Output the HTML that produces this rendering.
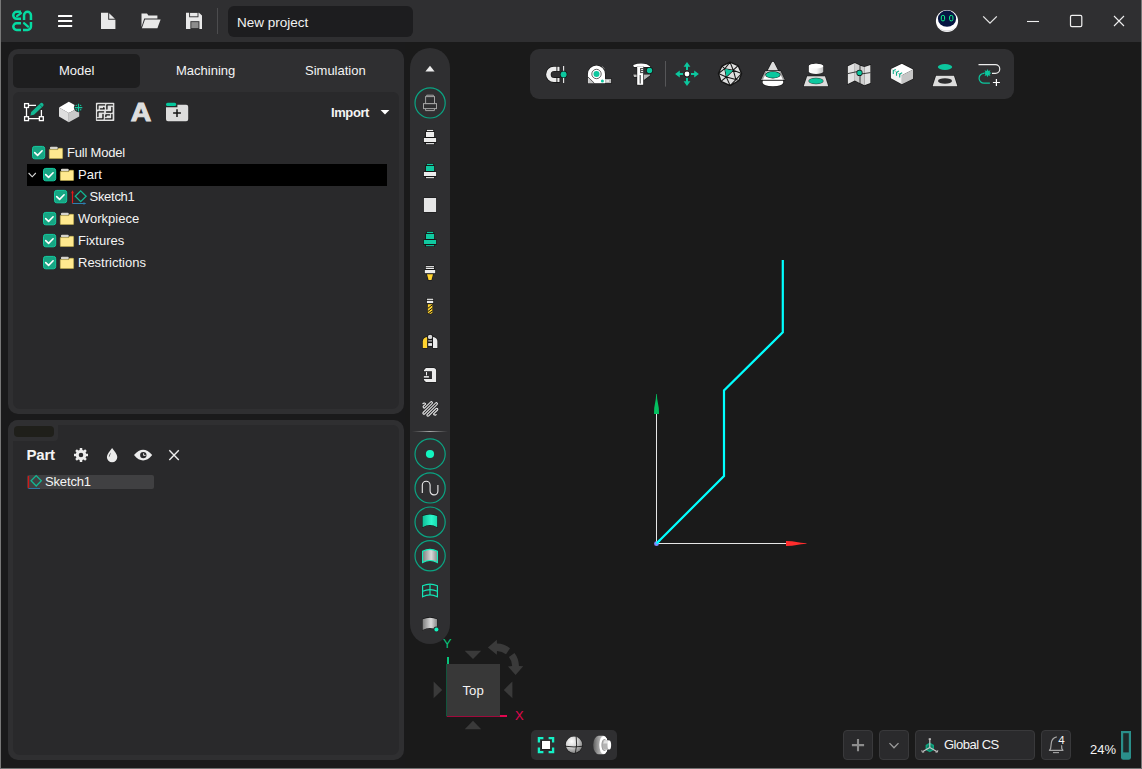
<!DOCTYPE html>
<html lang="en">
<head>
<meta charset="utf-8">
<title>New project</title>
<style>
html,body{margin:0;padding:0;}
body{width:1142px;height:769px;overflow:hidden;background:#1a1a1b;font-family:"Liberation Sans",sans-serif;color:#f2f2f2;position:relative;}
.abs{position:absolute;}
svg{position:absolute;overflow:visible;}
#titlebar{left:0;top:0;width:1142px;height:42px;background:#2f2f31;}
#viewport{left:405px;top:42px;width:737px;height:727px;background:#1a1a1a;}
#winL{left:0;top:0;width:1.15px;height:769px;background:#787878;}
#winR{left:1140.8px;top:0;width:1.2px;height:769px;background:#767676;}
#winB{left:0;top:767.5px;width:1142px;height:1.5px;background:#727272;}
.t{position:absolute;white-space:nowrap;line-height:1;}
#projbox{left:228px;top:6px;width:185px;height:31px;background:#1d1d1f;border-radius:6px;}
.panel{background:#2f2f31;border-radius:10px;}
.inner{background:#29292b;}
#tabActive{left:13px;top:54px;width:127px;height:34px;background:#1e1e1f;border-radius:5px;}
.tab{font-size:13px;top:64px;color:#f4f4f4;}
.tree{font-size:13px;color:#f4f4f4;}
.cb{position:absolute;width:13px;height:13px;border-radius:3px;background:#1fae8d;}
#vtool{left:410px;top:48px;width:40px;height:596px;border-radius:20px;background:#2f2f31;}
.ring{position:absolute;width:30px;height:30px;border-radius:50%;border:1px solid #0aa583;box-sizing:border-box;}
#htool{left:530px;top:49px;width:484px;height:50px;border-radius:9px;background:#2f2f31;}
.btn{position:absolute;background:#2a2a2c;border:1px solid #39393b;border-radius:4px;box-sizing:border-box;}
</style>
</head>
<body>
<div class="abs" id="viewport"></div>
<div class="abs" id="titlebar"></div>

<!-- ===== title bar ===== -->
<div class="abs" id="projbox"></div>
<div class="t" style="left:237px;top:15.5px;font-size:13.5px;color:#f2f2f2;">New project</div>
<div class="abs" style="left:217px;top:8px;width:1px;height:26px;background:#4c4c4e;"></div>
<svg id="tb-icons" width="1142" height="42" style="left:0;top:0" viewBox="0 0 1142 42">
  <!-- logo -->
  <g fill="none" stroke="#05dba2" stroke-width="2.5" stroke-linecap="butt" stroke-linejoin="round">
    <path d="M21 11.75 H16.8 A3.55 3.55 0 0 0 16.8 18.85 H21"/>
    <path d="M17 16.2 L21 13.2" stroke-linecap="round" stroke-width="2.2"/>
    <path d="M24.05 20 V15.2 A3.45 3.45 0 0 1 30.95 15.2 V20"/>
    <path d="M21 23.3 H16.6 A3.3 3.3 0 0 0 16.6 29.9 H21"/>
    <path d="M30.95 22 V26.5 A3.4 3.4 0 0 1 27.55 29.9 H23"/>
    <path d="M24 23.2 L28 26.7" stroke-linecap="round" stroke-width="2.2"/>
  </g>
  <!-- hamburger -->
  <g fill="#ffffff">
    <rect x="58" y="14.9" width="14.2" height="2.2" rx="0.6"/>
    <rect x="58" y="19.9" width="14.2" height="2.2" rx="0.6"/>
    <rect x="58" y="24.9" width="14.2" height="2.2" rx="0.6"/>
  </g>
  <!-- new file -->
  <path d="M101 12.7 H108.2 V19.7 H115.4 V29 H101 Z" fill="#e9e9e9"/>
  <path d="M109.2 13.2 L114.9 18.8 H109.2 Z" fill="#e9e9e9"/>
  <!-- open folder -->
  <path d="M141.5 13.4 H147 L148.4 15.5 H157.4 V18.6 H144.2 L141.5 27 Z" fill="#e9e9e9"/>
  <path d="M145 19.6 H160.6 L157.4 28.3 H141.9 Z" fill="#e9e9e9"/>
  <!-- save -->
  <path d="M186 12.7 H199 L202 15.6 V29 H186 Z" fill="#e9e9e9"/>
  <rect x="189.6" y="12.2" width="8.4" height="4.6" fill="none" stroke="#2f2f31" stroke-width="0.9"/>
  <rect x="190.4" y="21.2" width="9" height="7.8" fill="#2f2f31"/>
  <rect x="191.3" y="22.1" width="7.2" height="6" fill="#8c8c8c"/>
  <!-- avatar -->
  <ellipse cx="947" cy="21" rx="11.1" ry="11.1" fill="#ffffff"/>
  <path d="M937 25 A11 11 0 0 0 957 25 A11 9 0 0 1 937 25Z" fill="#d8d8dc"/>
  <ellipse cx="947" cy="18.7" rx="9.1" ry="8.1" fill="#061542"/>
  <rect x="941.3" y="15.4" width="3.3" height="5.5" rx="1.5" fill="none" stroke="#10f58a" stroke-width="1"/>
  <rect x="949.6" y="15.4" width="3.3" height="5.5" rx="1.5" fill="none" stroke="#10f58a" stroke-width="1"/>
  <!-- chevron -->
  <path d="M983.2 16.4 L990 23.2 L996.8 16.4" fill="none" stroke="#e4e4e4" stroke-width="1.3"/>
  <!-- window controls -->
  <path d="M1027 21.5 H1039" stroke="#f0f0f0" stroke-width="1.1"/>
  <rect x="1070.5" y="15.4" width="11.3" height="11.2" rx="1.4" fill="none" stroke="#f0f0f0" stroke-width="1.2"/>
  <path d="M1114 16 L1124 26 M1124 16 L1114 26" stroke="#f0f0f0" stroke-width="1.1"/>
</svg>

<!-- ===== left panel 1 ===== -->
<div class="abs panel" style="left:8px;top:48.8px;width:396.2px;height:365.2px;"></div>
<div class="abs inner" style="left:13px;top:92px;width:386px;height:316.8px;border-radius:6px 6px 7px 7px;"></div>
<div class="abs" id="tabActive"></div>
<div class="t tab" style="left:59px;">Model</div>
<div class="t tab" style="left:176px;">Machining</div>
<div class="t tab" style="left:305px;">Simulation</div>
<div class="t" style="left:331px;top:106px;font-size:13px;font-weight:bold;letter-spacing:-0.4px;color:#f4f4f4;">Import</div>
<div class="abs" style="left:27px;top:164px;width:360px;height:22px;background:#000;"></div>
<svg id="p1-icons" width="404" height="420" style="left:0;top:0" viewBox="0 0 404 420">
  <g fill="none" stroke="#ffffff" stroke-width="1.3">
    <path d="M26.5 107 V117 M29 105.4 H36 M41.4 110 V116.5 M29 118.6 H39"/>
    <rect x="24.6" y="103.6" width="3.9" height="3.9"/>
    <rect x="24.6" y="116.7" width="3.9" height="3.9"/>
    <rect x="39.4" y="116.7" width="3.9" height="3.9"/>
  </g>
  <path d="M30.4 115.6 L31.2 112 L40.2 103.4 A1.9 1.9 0 0 1 43 106.2 L34 114.8 Z" fill="#12b793"/>
  <path d="M39.4 104.2 L42.2 107" stroke="#0a7a62" stroke-width="0.9"/>
  <path d="M68.8 101.8 L79.2 107.4 L68.8 113 L59 107.4 Z" fill="#ffffff"/>
  <path d="M59 107.4 L68.8 113 V122.2 L59 116.6 Z" fill="#dedede"/>
  <path d="M79.2 107.4 L68.8 113 V122.2 L79.2 116.6 Z" fill="#c9c9c9"/>
  <circle cx="78.5" cy="107.6" r="4.6" fill="#29292b"/>
  <path d="M78.5 103.8 V111.4 M74.7 107.6 H82.3" stroke="#12c79f" stroke-width="1.2"/>
  <g fill="#12c79f"><circle cx="76.3" cy="105.4" r="0.7"/><circle cx="80.7" cy="105.4" r="0.7"/><circle cx="76.3" cy="109.8" r="0.7"/><circle cx="80.7" cy="109.8" r="0.7"/></g>
  <rect x="95.9" y="102.8" width="18.4" height="18.3" rx="0.8" fill="#e2e2e2"/>
  <g fill="none" stroke="#141414" stroke-width="1.35" stroke-linecap="round" stroke-linejoin="round">
    <path d="M104.6 104.9 H97.9 V109"/>
    <path d="M100.4 108.8 H104.3 M103.8 107.7 V108.8"/>
    <path d="M112.5 104.9 H106.9 V109"/>
    <path d="M111.9 107.4 V112 H106.5"/>
    <path d="M103.6 111.8 H97.9 V116.5"/>
    <path d="M103 114.5 V118.9 H97.4"/>
    <path d="M109.5 114.9 H105.9 V116.5"/>
    <path d="M111.9 114.5 V118.9 H105.4"/>
  </g>
  <text x="141.1" y="121.2" text-anchor="middle" font-family="Liberation Sans, sans-serif" font-weight="bold" font-size="26.3" fill="#dedede" stroke="#dedede" stroke-width="1.1" stroke-linejoin="miter" transform="translate(141.1 0) scale(1.08 1) translate(-141.1 0)">A</text>
  <rect x="166" y="102.7" width="10.2" height="3.4" rx="1.6" fill="#05c79c"/>
  <path d="M166 107.2 H177.4 V104.7 H186.2 Q188.2 104.7 188.2 106.7 V119.2 Q188.2 121.2 186.2 121.2 H168 Q166 121.2 166 119.2 Z" fill="#dcdcdc"/>
  <path d="M177 109.2 V117 M173.1 113.1 H180.9" stroke="#151515" stroke-width="1.5"/>
  <path d="M380.6 109.9 H389.4 L385 114.5 Z" fill="#ffffff"/>
  <rect x="32.5" y="146.4" width="12.2" height="12.4" rx="2.2" fill="#17a583" stroke="#12cda2" stroke-width="1"/><path d="M34.7 152.6 L37.6 155.4 L42.1 150.8" fill="none" stroke="#ffffff" stroke-width="1.6" stroke-linecap="round" stroke-linejoin="round"/><rect x="49.9" y="146.7" width="7.9" height="2.6" rx="1.2" fill="#d6d4cc"/><path d="M49.3 149.6 H57.9 L58.6 148.3 H62.1 Q62.6 148.3 62.6 148.8 V158.0 Q62.6 158.5 62.1 158.5 H49.8 Q49.3 158.5 49.3 158.0 Z" fill="#ffe98f" stroke="#c9b44a" stroke-width="0.5"/>
  <path d="M28.6 173 L32.2 176.8 L35.8 173" fill="none" stroke="#d8d8d8" stroke-width="1.1"/>
  <rect x="43.5" y="168.4" width="12.2" height="12.4" rx="2.2" fill="#17a583" stroke="#12cda2" stroke-width="1"/><path d="M45.7 174.6 L48.6 177.4 L53.1 172.8" fill="none" stroke="#ffffff" stroke-width="1.6" stroke-linecap="round" stroke-linejoin="round"/><rect x="60.9" y="168.7" width="7.9" height="2.6" rx="1.2" fill="#d6d4cc"/><path d="M60.3 171.6 H68.9 L69.6 170.3 H73.1 Q73.6 170.3 73.6 170.8 V180.0 Q73.6 180.5 73.1 180.5 H60.8 Q60.3 180.5 60.3 180.0 Z" fill="#ffe98f" stroke="#c9b44a" stroke-width="0.5"/>
  <rect x="54.5" y="190.4" width="12.2" height="12.4" rx="2.2" fill="#17a583" stroke="#12cda2" stroke-width="1"/><path d="M56.7 196.6 L59.6 199.4 L64.1 194.8" fill="none" stroke="#ffffff" stroke-width="1.6" stroke-linecap="round" stroke-linejoin="round"/><path d="M72.5 191.3 V203.5" stroke="#e01818" stroke-width="1.2"/><path d="M71.1 193.3 L72.5 190.3 L73.9 193.3 Z" fill="#e01818"/><path d="M72.5 203.5 H84.5" stroke="#2d7fb0" stroke-width="1"/><path d="M83.5 202.3 L86.3 203.5 L83.5 204.70000000000002 Z" fill="#2d7fb0"/><path d="M80.7 190.9 L86.1 196.3 L80.7 201.70000000000002 L75.3 196.3 Z" fill="none" stroke="#12b793" stroke-width="1.3"/>
  <rect x="43.5" y="212.4" width="12.2" height="12.4" rx="2.2" fill="#17a583" stroke="#12cda2" stroke-width="1"/><path d="M45.7 218.6 L48.6 221.4 L53.1 216.8" fill="none" stroke="#ffffff" stroke-width="1.6" stroke-linecap="round" stroke-linejoin="round"/><rect x="60.9" y="212.7" width="7.9" height="2.6" rx="1.2" fill="#d6d4cc"/><path d="M60.3 215.6 H68.9 L69.6 214.3 H73.1 Q73.6 214.3 73.6 214.8 V224.0 Q73.6 224.5 73.1 224.5 H60.8 Q60.3 224.5 60.3 224.0 Z" fill="#ffe98f" stroke="#c9b44a" stroke-width="0.5"/>
  <rect x="43.5" y="234.4" width="12.2" height="12.4" rx="2.2" fill="#17a583" stroke="#12cda2" stroke-width="1"/><path d="M45.7 240.6 L48.6 243.4 L53.1 238.8" fill="none" stroke="#ffffff" stroke-width="1.6" stroke-linecap="round" stroke-linejoin="round"/><rect x="60.9" y="234.7" width="7.9" height="2.6" rx="1.2" fill="#d6d4cc"/><path d="M60.3 237.6 H68.9 L69.6 236.3 H73.1 Q73.6 236.3 73.6 236.8 V246.0 Q73.6 246.5 73.1 246.5 H60.8 Q60.3 246.5 60.3 246.0 Z" fill="#ffe98f" stroke="#c9b44a" stroke-width="0.5"/>
  <rect x="43.5" y="256.4" width="12.2" height="12.4" rx="2.2" fill="#17a583" stroke="#12cda2" stroke-width="1"/><path d="M45.7 262.6 L48.6 265.4 L53.1 260.8" fill="none" stroke="#ffffff" stroke-width="1.6" stroke-linecap="round" stroke-linejoin="round"/><rect x="60.9" y="256.7" width="7.9" height="2.6" rx="1.2" fill="#d6d4cc"/><path d="M60.3 259.6 H68.9 L69.6 258.3 H73.1 Q73.6 258.3 73.6 258.8 V268.0 Q73.6 268.5 73.1 268.5 H60.8 Q60.3 268.5 60.3 268.0 Z" fill="#ffe98f" stroke="#c9b44a" stroke-width="0.5"/>
</svg>

<!-- tree -->
<div class="t tree" style="left:67px;top:146px;letter-spacing:-0.2px;">Full Model</div>
<div class="t tree" style="left:78px;top:168px;">Part</div>
<div class="t tree" style="left:89.5px;top:190px;letter-spacing:-0.28px;">Sketch1</div>
<div class="t tree" style="left:78px;top:212px;">Workpiece</div>
<div class="t tree" style="left:78px;top:234px;">Fixtures</div>
<div class="t tree" style="left:78px;top:256px;">Restrictions</div>

<!-- ===== left panel 2 ===== -->
<div class="abs panel" style="left:8px;top:420px;width:396.2px;height:340.3px;"></div>
<div class="abs inner" style="left:13px;top:425px;width:386px;height:330.3px;border-radius:6px 6px 7px 7px;"></div>
<div class="abs" style="left:8px;top:420px;width:50px;height:20.8px;background:#2f2f31;border-radius:10px 0 4px 0;"></div>
<div class="abs" style="left:14px;top:426px;width:40px;height:10.8px;background:#1f1f1a;border-radius:4px;"></div>
<div class="t" style="left:26.5px;top:446.8px;font-size:15px;font-weight:bold;letter-spacing:-0.2px;color:#f4f4f4;">Part</div>
<div class="abs" style="left:27px;top:475px;width:127px;height:14px;background:#404042;border-radius:2px;"></div>
<div class="t" style="left:45px;top:475px;font-size:13px;letter-spacing:-0.15px;color:#f4f4f4;">Sketch1</div>
<svg id="p2-icons" width="404" height="349" style="left:0;top:420px" viewBox="0 420 404 349">
  <path d="M79.64 449.88 L79.80 448.00 L82.20 448.00 L82.36 449.88 L83.66 450.41 L85.10 449.20 L86.80 450.90 L85.59 452.34 L86.12 453.64 L88.00 453.80 L88.00 456.20 L86.12 456.36 L85.59 457.66 L86.80 459.10 L85.10 460.80 L83.66 459.59 L82.36 460.12 L82.20 462.00 L79.80 462.00 L79.64 460.12 L78.34 459.59 L76.90 460.80 L75.20 459.10 L76.41 457.66 L75.88 456.36 L74.00 456.20 L74.00 453.80 L75.88 453.64 L76.41 452.34 L75.20 450.90 L76.90 449.20 L78.34 450.41 Z M78.7 455 a2.3 2.3 0 1 0 4.6 0 a2.3 2.3 0 1 0 -4.6 0 Z" fill="#ececec" fill-rule="evenodd"/>
  <path d="M112.1 448 C114.6 451.4 117.3 454.2 117.3 457 A5.2 5.2 0 0 1 106.9 457 C106.9 454.2 109.6 451.4 112.1 448 Z" fill="#ececec"/>
  <path d="M110.9 452.4 C109.4 454.4 108.7 455.8 108.9 457.3 C109.5 456 110.4 454.6 110.9 452.4 Z" fill="#29292b"/>
  <path d="M134 455.1 C137 451.2 140.2 449.7 143.1 449.7 C146 449.7 149.2 451.2 152.2 455.1 C149.2 459 146 460.5 143.1 460.5 C140.2 460.5 137 459 134 455.1 Z" fill="#ececec"/>
  <circle cx="143.3" cy="455.1" r="3.2" fill="#29292b"/>
  <path d="M143.6 453.3 V455.4 H145.6" fill="none" stroke="#ececec" stroke-width="0.9"/>
  <path d="M169.3 450.3 L178.8 460 M178.8 450.3 L169.3 460" stroke="#ececec" stroke-width="1.4"/>
  <!-- sketch chip icon -->
  <path d="M28.5 476 V488" stroke="#d01818" stroke-width="1.3"/>
  <path d="M28.5 488.5 H40" stroke="#2d7fb0" stroke-width="0.9"/>
  <path d="M36.2 475.6 L41.3 480.8 L36.2 486 L31.1 480.8 Z" fill="none" stroke="#12b793" stroke-width="1.3"/>
</svg>

<!-- ===== vertical toolbar ===== -->
<div class="abs" id="vtool"></div>
<svg id="vt-icons" width="60" height="620" style="left:400px;top:40px" viewBox="400 40 60 620">
<defs>
<linearGradient id="gTeal" x1="0" x2="1" y1="0" y2="0"><stop offset="0" stop-color="#0fbf98"/><stop offset="0.6" stop-color="#2cf7cb"/><stop offset="1" stop-color="#17dcb0"/></linearGradient>
<linearGradient id="gGrey" x1="0" x2="1" y1="0" y2="0"><stop offset="0" stop-color="#7e7e7e"/><stop offset="0.58" stop-color="#dadada"/><stop offset="1" stop-color="#8a8a8a"/></linearGradient>
<linearGradient id="gSep" x1="0" x2="1" y1="0" y2="0"><stop offset="0" stop-color="#8a8a8a" stop-opacity="0"/><stop offset="0.5" stop-color="#a8a8a8" stop-opacity="1"/><stop offset="1" stop-color="#8a8a8a" stop-opacity="0"/></linearGradient>
</defs>
<path d="M425.4 71.4 L430 65.8 L434.6 71.4 Z" fill="#ececec"/>
<circle cx="430.1" cy="102.9" r="15.1" fill="none" stroke="#0aa583" stroke-width="1.2"/>
<g fill="none" stroke="#a2a2a2" stroke-width="1"><path d="M426.7 96.2 V95.2 H433.4 V96.2"/><rect x="425.6" y="96.6" width="8.9" height="7"/><rect x="423.5" y="103.6" width="13" height="5"/><path d="M425.6 108.6 V110.6 H434.4 V108.6"/></g>
<path d="M426.2 129.4 H433.8 V131.2 H434.7 V137.4 H436.7 V142.8 H434.7 V144.8 H425.3 V142.8 H423.3 V137.4 H425.3 V131.2 H426.2 Z" fill="#141414"/><rect x="426.9" y="129.9" width="6.3" height="1.2" fill="#ececec"/><rect x="426" y="132" width="8.1" height="5" fill="#ececec"/><rect x="423.9" y="138" width="12.2" height="4" fill="#ececec"/><rect x="426" y="143.1" width="8.1" height="1.1" fill="#ececec"/>
<path d="M426.2 163.4 H433.8 V165.2 H434.7 V171.4 H436.7 V176.8 H434.7 V178.8 H425.3 V176.8 H423.3 V171.4 H425.3 V165.2 H426.2 Z" fill="#141414"/><rect x="426.9" y="163.9" width="6.3" height="1.2" fill="#10c9a0"/><rect x="426" y="166" width="8.1" height="5" fill="#10c9a0"/><rect x="423.9" y="172" width="12.2" height="4" fill="#ececec"/><rect x="426" y="177.1" width="8.1" height="1.1" fill="#ececec"/>
<rect x="423.4" y="197.5" width="13.2" height="15" fill="#141414"/><rect x="423.9" y="198" width="12.2" height="14" fill="#e6e6e6"/>
<path d="M426.2 231.4 H433.8 V233.2 H434.7 V239.4 H436.7 V244.8 H434.7 V246.8 H425.3 V244.8 H423.3 V239.4 H425.3 V233.2 H426.2 Z" fill="#141414"/><rect x="426.9" y="231.9" width="6.3" height="1.2" fill="#10c9a0"/><rect x="426" y="234" width="8.1" height="5" fill="#10c9a0"/><rect x="423.9" y="240" width="12.2" height="4" fill="#10c9a0"/><rect x="426" y="245.1" width="8.1" height="1.1" fill="#10c9a0"/>
<path d="M425.2 265.5 H434.6 V269.5 H435.8 V273.8 H433.6 L432 280.6 H428 L426.4 273.8 H424.2 V269.5 H425.2 Z" fill="#141414"/><rect x="425.8" y="266.1" width="8.2" height="1.1" fill="#ececec"/><rect x="425.8" y="267.8" width="8.2" height="1.2" fill="#ececec"/><rect x="424.8" y="270" width="10.4" height="3.2" fill="#ececec"/><path d="M427 274.3 H433 L431.5 280 H428.5 Z" fill="#ffd22e"/>
<rect x="426.3" y="298.1" width="7.5" height="5.6" fill="#141414"/><rect x="426.9" y="298.7" width="6.3" height="1.2" fill="#ececec"/><rect x="426.9" y="300.8" width="6.3" height="2.3" fill="#ececec"/><path d="M427.2 303.8 H433 V313.2 L430.1 314.6 L427.2 313.2 Z" fill="#141414"/><path d="M427.8 304.3 H432.4 V312.9 L430.1 313.9 L427.8 312.9 Z" fill="#ffd22e"/><path d="M427.8 308.4 L432.4 304.8 M427.8 311.6 L432.4 308 M428.6 313.6 L432.4 311.0" stroke="#141414" stroke-width="1" fill="none"/>
<path d="M422.3 348.6 V341.6 Q422.3 336.8 427.7 336.3 V348.6 Z" fill="#141414"/><path d="M437.9 348.6 V341.6 Q437.9 336.8 432.5 336.3 V348.6 Z" fill="#141414"/><path d="M422.8 348.1 V341.6 Q422.8 337.4 427.2 336.9 V348.1 Z" fill="#ffd22e"/><path d="M437.4 348.1 V341.6 Q437.4 337.4 433 336.9 V348.1 Z" fill="#ececec"/><circle cx="430.1" cy="336.9" r="2.8" fill="#141414"/><circle cx="430.1" cy="336.9" r="2.2" fill="#d6d6d6"/><rect x="427.7" y="339.6" width="4.8" height="7" fill="#141414"/><rect x="428.2" y="340.4" width="3.8" height="1" fill="#ececec"/><rect x="428.2" y="343.1" width="3.8" height="2.8" fill="#ececec"/>
<path d="M423.4 370 L425.6 367.4 H433.4 Q436.6 367.4 436.6 370.6 V382.4 H425.6 L423.4 380.2 V378.4 H431.4 V371.8 H423.4 Z" fill="#141414"/><path d="M423.9 370.2 L425.9 367.9 H433.4 Q436.1 367.9 436.1 370.6 V381.9 H425.9 L423.9 380 V378.9 H431.9 V371.3 H423.9 Z" fill="#ececec"/><rect x="426" y="372" width="1" height="3.4" fill="#ececec"/><rect x="423.9" y="376.1" width="5" height="1.5" fill="#ececec"/>
<g fill="none" stroke-linecap="round" transform="translate(419.6 399)"><path d="M3.3 4.6 A1.5 1.5 0 0 1 6 5 L3.8 7.2 A1.06 1.06 0 0 0 5.3 8.7 L11 3 A1.06 1.06 0 0 1 12.5 4.5 L3.6 13.4 A1.06 1.06 0 0 0 5.1 14.9 L16 4 A1.06 1.06 0 0 1 17.5 5.5 L7.6 15.4 A1.06 1.06 0 0 0 9.1 16.9 L16.4 9.6 A1.06 1.06 0 0 1 17.9 11.1 L14 15 A1.5 1.5 0 0 0 16.6 15.6" stroke="#f0f0f0" stroke-width="1.05"/></g>
<rect x="412" y="431" width="36" height="1" fill="url(#gSep)"/>
<circle cx="430.1" cy="454" r="15.1" fill="none" stroke="#0aa583" stroke-width="1.2"/><circle cx="430" cy="454" r="4.1" fill="#12f5c0"/>
<circle cx="430.1" cy="487.9" r="15.1" fill="none" stroke="#0aa583" stroke-width="1.2"/><path d="M422.3 493 V485.1 A3.9 3.9 0 0 1 430.1 485.1 V491 A3.9 3.9 0 0 0 437.9 491 V485" fill="none" stroke="#ececec" stroke-width="1.1"/>
<circle cx="430.1" cy="522.1" r="15.1" fill="none" stroke="#0aa583" stroke-width="1.2"/><path d="M422.1 515.6 Q430 512.4 437.7 515.6 V528 Q430 523.2 422.1 528 Z" fill="#141414"/><path d="M422.6 516 Q430 513 437.2 516 V527.3 Q430 522.8 422.6 527.3 Z" fill="url(#gTeal)"/>
<circle cx="430.1" cy="555.8" r="15.1" fill="none" stroke="#0aa583" stroke-width="1.2"/><path d="M422.6 551.2 Q430 547.6 437.4 551.2 V562.6 Q430 558.4 422.6 562.6 Z" fill="url(#gGrey)" stroke="#12f5c0" stroke-width="1.1"/>
<g fill="none" stroke="#12e5b5" stroke-width="1.2"><path d="M422.6 585.8 Q430 582.6 437.4 585.8 V596.8 Q430 593 422.6 596.8 Z"/><path d="M422.6 591.2 Q430 588 437.4 591.2"/><path d="M430 584.2 V594.9"/></g>
<path d="M422.1 618.9 Q430 615.2 437.6 618.9 V630.6 Q430 626.2 422.1 630.6 Z" fill="#141414"/><path d="M422.6 619.3 Q430 616 437.1 619.3 V630 Q430 626 422.6 630 Z" fill="url(#gGrey)"/><circle cx="436.4" cy="629.5" r="3" fill="#2f2f31"/><circle cx="436.4" cy="629.5" r="2" fill="#12f5c0"/>
</svg>

<!-- ===== horizontal toolbar ===== -->
<div class="abs" id="htool"></div>
<svg id="ht-icons" width="500" height="60" style="left:525px;top:44px" viewBox="525 44 500 60">
<defs><linearGradient id="gCyl" x1="0" x2="1" y1="0" y2="0"><stop offset="0" stop-color="#ffffff"/><stop offset="0.55" stop-color="#f4f4f4"/><stop offset="1" stop-color="#bdbdbd"/></linearGradient></defs>
<path d="M559.5 66.7 H553.8 A7.7 7.7 0 0 0 553.8 82.1 H559.5 V77.9 H554.2 A3.5 3.5 0 0 1 554.2 70.9 H559.5 Z" fill="#ececec" stroke="#141414" stroke-width="1.2" paint-order="stroke"/><path d="M556.9 66.3 V71.2 M556.9 77.7 V82.6" stroke="#141414" stroke-width="0.9"/><path d="M563.6 66 V83" stroke="#ececec" stroke-width="1.1"/><circle cx="563.6" cy="74.4" r="3.7" fill="#141414"/><circle cx="563.6" cy="74.4" r="3" fill="#0cc79e"/>
<path d="M587.4 83.7 V74 A9 9 0 0 1 605.5 74 V78.3 H611.6 V83.7 Z" fill="#141414"/><path d="M587.9 83.2 V74 A8.5 8.5 0 0 1 605 74 V83.2 Z" fill="#ffffff"/><rect x="605" y="78.9" width="6.1" height="4.2" fill="#b9b9b9"/><rect x="606.4" y="80.2" width="2.6" height="1.6" fill="#f2f2f2"/><path d="M588.2 77.4 L594 83 H588.2 Z" fill="#c4c4c4"/><path d="M588 77 L594.4 83.2" stroke="#141414" stroke-width="0.7"/><circle cx="596.5" cy="74" r="4.7" fill="none" stroke="#3a3a3a" stroke-width="0.8"/><circle cx="596.5" cy="74" r="3" fill="#0cc79e"/><circle cx="602.4" cy="81" r="1.5" fill="#0cc79e"/><path d="M601.9 66.3 L604.6 68.8" stroke="#9a9a9a" stroke-width="0.8"/>
<g stroke="#141414" stroke-width="1.1" paint-order="stroke" stroke-linejoin="round"><path d="M633.2 74.6 H637.2 V77 H634 Z" fill="#bdbdbd"/><path d="M643.2 74.6 H650.2 V75.2 L643.2 80.6 Z" fill="#b4b4b4"/><path d="M633.2 65 L637.2 63.8 Q642 63 646.8 64.2 L650.2 66.4 V67 H633.8 Z" fill="#ffffff"/><rect x="637.2" y="67" width="6" height="17.8" fill="#ffffff"/></g><rect x="637.2" y="66.4" width="6" height="1.2" fill="#ffffff"/><path d="M640.2 75 V83.6" stroke="#141414" stroke-width="0.9"/><path d="M641 68.6 H643.2 M641 70.6 H643.2 M641 72.6 H643.2 M640.6 68 V73.2" stroke="#141414" stroke-width="0.8"/><circle cx="649.5" cy="70.5" r="3.4" fill="#141414"/><circle cx="649.5" cy="70.5" r="2.7" fill="#0cc79e"/>
<rect x="665" y="61" width="1" height="25.6" fill="#565658"/>
<path transform="rotate(0 687 74)" d="M687 62.1 L690.4 66.8 H688 V70 H686 V66.8 H683.6 Z" fill="#0cc79e"/><path transform="rotate(90 687 74)" d="M687 62.1 L690.4 66.8 H688 V70 H686 V66.8 H683.6 Z" fill="#0cc79e"/><path transform="rotate(180 687 74)" d="M687 62.1 L690.4 66.8 H688 V70 H686 V66.8 H683.6 Z" fill="#0cc79e"/><path transform="rotate(270 687 74)" d="M687 62.1 L690.4 66.8 H688 V70 H686 V66.8 H683.6 Z" fill="#0cc79e"/><circle cx="687" cy="74" r="3.1" fill="#141414"/><circle cx="687" cy="74" r="2.4" fill="#ffffff"/>
<path d="M730 62.1 L738.1 65.6 L741.6 73.5 L739 80.5 L730.2 85.6 L721 81.4 L718.4 73.5 L721.9 66.1 Z" fill="#dedede" stroke="#141414" stroke-width="1.3" stroke-linejoin="round"/><path d="M730 62.1 L724.8 68.7 M730 62.1 L733.3 70.2 M721.9 66.1 L724.8 68.7 M718.4 73.5 L724.8 68.7 M718.4 73.5 L726.3 77 M724.8 68.7 L733.3 70.2 M724.8 68.7 L726.3 77 M733.3 70.2 L726.3 77 M733.3 70.2 L738.1 65.6 M733.3 70.2 L741.6 73.5 M733.3 70.2 L735.9 79.6 M726.3 77 L735.9 79.6 M726.3 77 L721 81.4 M726.3 77 L730.2 85.6 M735.9 79.6 L730.2 85.6 M735.9 79.6 L739 80.5 M735.9 79.6 L741.6 73.5 " fill="none" stroke="#141414" stroke-width="1.05"/><path d="M725.1 69.1 L732.9 70.4 L726.5 76.6 Z" fill="#0cc79e"/>
<path d="M772.9 61.2 Q774.2 61.2 774.8 62.6 L778.6 70.4 H781 L785.6 80.6 H783.7 L783.8 83 Q783 86.8 772.9 86.8 Q762.8 86.8 762 83 L762.1 80.6 H760.2 L764.8 70.4 H767.2 L771 62.6 Q771.6 61.2 772.9 61.2 Z" fill="#141414"/><path d="M772.9 61.8 Q773.8 61.8 774.3 62.9 L778 70.2 H767.8 L771.5 62.9 Q772 61.8 772.9 61.8 Z" fill="#dcdcdc"/><path d="M765.2 70.9 H780.6 L784.8 80.1 H761 Z" fill="#9c9c9c"/><path d="M766.8 71.6 H779 L782.8 79.4 H763 Z" fill="#ffffff"/><path d="M762.7 80.8 H783.1 L783.2 82.8 Q782.4 86.2 772.9 86.2 Q763.4 86.2 762.6 82.8 Z" fill="#ffffff"/><ellipse cx="772.9" cy="74.8" rx="7.7" ry="3.6" fill="#141414"/><ellipse cx="772.9" cy="74.8" rx="7.1" ry="3" fill="#0cc79e"/>
<path d="M808.3 66 A7.8 2.9 0 0 1 823.8 66 V71.6 A7.8 2.9 0 0 1 808.3 71.6 Z" fill="#141414"/><path d="M808.8 66.1 A7.25 2.4 0 0 1 823.3 66.1 V71.5 A7.25 2.4 0 0 1 808.8 71.5 Z" fill="url(#gCyl)"/><ellipse cx="816.05" cy="66.1" rx="7.25" ry="2.4" fill="#ffffff"/><path d="M806.7 75.7 H825.4 L829.1 86.8 H802.9 Z" fill="#141414"/><path d="M807.1 76.3 H825 L828.3 86.2 H803.7 Z" fill="#dcdcdc"/><ellipse cx="816" cy="81" rx="7.6" ry="3.3" fill="#3a3a3a"/><ellipse cx="816" cy="81" rx="7.1" ry="2.8" fill="#0cc79e"/>
<path d="M847.2 65.8 L854.8 62.2 L860 64.8 L864.4 66.4 L871 64 V83.4 L864.4 85.9 L860 83.8 L854.8 81.2 L847.2 85 Z" fill="#141414"/><path d="M847.8 66.2 L854.8 62.9 V80.5 L847.8 84.1 Z" fill="#e2e2e2"/><path d="M854.8 62.9 L859.6 65.3 V82.9 L854.8 80.5 Z" fill="#cfcfcf"/><path d="M860.4 65.7 L864.4 67.1 V85.2 L860.4 83.3 Z" fill="#cfcfcf"/><path d="M864.4 67.1 L870.4 64.9 V83 L864.4 85.2 Z" fill="#e2e2e2"/><path d="M847.8 73.6 L859.6 71.1 M860.4 74.1 L870.4 72.6" stroke="#141414" stroke-width="0.8"/><circle cx="859.5" cy="72.9" r="3.1" fill="#141414"/><circle cx="859.5" cy="72.9" r="2.4" fill="#0cc79e"/>
<path d="M901.9 63.1 L913.7 69.3 V79.1 L901.9 84.8 L890.3 78.6 V68.8 Z" fill="#141414"/><path d="M901.9 63.7 L913.1 69.6 L901.9 75.3 L890.9 69.1 Z" fill="#ffffff"/><path d="M890.9 69.1 L901.9 75.3 V84.2 L890.9 78.3 Z" fill="#f4f4f4"/><path d="M913.1 69.6 L901.9 75.3 V84.2 L913.1 78.8 Z" fill="#c6c6c6"/><path d="M893.3 74 V70.6 L895.8 69.4 M896.5 75.8 V72.3 L899 71.1 M899.7 77.6 V74 L902.2 72.8" fill="none" stroke="#0fae8b" stroke-width="1.1"/>
<ellipse cx="945" cy="67" rx="7.2" ry="2.9" fill="#0cc79e"/><path d="M935.6 75.2 H954.4 L958.2 86.8 H931.8 Z" fill="#141414"/><path d="M936 75.8 H954 L957.4 86.2 H932.6 Z" fill="#dcdcdc"/><ellipse cx="945" cy="81" rx="7" ry="2.7" fill="#2b2b2d"/>
<path d="M978.5 64.6 H995.4 A4.35 4.35 0 0 1 995.4 73.3 H992" fill="none" stroke="#ececec" stroke-width="1.2"/><path d="M983.4 73.3 H984.6 A4.95 4.95 0 0 0 984.6 83.2 H990.5" fill="none" stroke="#0cc79e" stroke-width="1.2" transform="translate(-0.6 0)"/><path d="M987.50 69.00 L988.38 70.98 L990.40 70.20 L989.62 72.22 L991.60 73.10 L989.62 73.98 L990.40 76.00 L988.38 75.22 L987.50 77.20 L986.62 75.22 L984.60 76.00 L985.38 73.98 L983.40 73.10 L985.38 72.22 L984.60 70.20 L986.62 70.98 Z" fill="#0cc79e"/><path d="M996.4 79 V86 M992.9 82.5 H999.9" stroke="#ffffff" stroke-width="1.2"/>
</svg>

<!-- ===== viewport content ===== -->
<svg id="scene" width="737" height="727" style="left:405px;top:42px" viewBox="405 42 737 727">
  <!-- axes -->
  <line x1="656.5" y1="543.5" x2="656.5" y2="413" stroke="#e6e6e6" stroke-width="1"/>
  <line x1="656.5" y1="543.5" x2="787" y2="543.5" stroke="#e6e6e6" stroke-width="1"/>
  <path d="M654 414 L654.2 408 L655.8 399 L656.2 394 L656.8 394 L657.2 399 L658.8 408 L659 414 Z" fill="#04c060"/>
  <path d="M786 541 L792 541.2 L801 542.8 L806.5 543.2 L806.5 543.8 L801 544.2 L792 545.8 L786 546 Z" fill="#ff2d2d"/>
  <!-- sketch -->
  <polyline points="656.5,543.5 724,476 724,390.5 782.8,332.3 782.8,260" fill="none" stroke="#00ffff" stroke-width="2.2" stroke-linejoin="miter"/>
  <circle cx="656.5" cy="543.7" r="2.4" fill="#7f8cff"/>
  <path d="M656.5 543.5 L660 540" stroke="#00ffff" stroke-width="2.2" fill="none"/>
  <!-- nav cube decorations -->
  <g fill="#3a3a3a">
    <path d="M464.7 650.8 L481.2 650.8 L473 659 Z"/>
    <path d="M464.7 729.2 L481.2 729.2 L473 720.8 Z"/>
    <path d="M433.6 681.5 L433.6 698.3 L442.2 690 Z"/>
    <path d="M512.4 681.5 L512.4 698.3 L503.8 690 Z"/>
    <path d="M487.9 647.4 L496.8 639.7 L497 643.5 Q504.5 643.6 510 648.3 L506 654.2 Q502 651.2 497 650.9 L496.8 654.8 Z"/>
    <path d="M515.6 675 L508 666.5 L512.2 665.9 Q511.8 660.6 508.9 657.1 L514.5 653.1 Q518.6 658.4 519 665.9 L523.2 666.2 Z"/>
  </g>
  <rect x="447" y="657" width="2" height="7.5" fill="#08c47c"/>
  <rect x="446.5" y="664" width="1" height="52.5" fill="#0a8f60"/>
  <rect x="447" y="716" width="53" height="1" fill="#a00a3c"/>
  <rect x="500" y="715" width="7" height="2" fill="#e2064f"/>
</svg>

<!-- ===== bottom bar ===== -->
<div class="abs" style="left:531px;top:730px;width:86px;height:30px;background:#2f2f31;border-radius:5px;"></div>
<div class="btn" style="left:843px;top:730px;width:30px;height:30px;"></div>
<div class="btn" style="left:879px;top:730px;width:30px;height:30px;"></div>
<div class="btn" style="left:915px;top:730px;width:120px;height:30px;"></div>
<div class="btn" style="left:1041px;top:730px;width:30px;height:30px;"></div>
<div class="t" style="left:944px;top:738px;font-size:13px;letter-spacing:-0.5px;color:#f4f4f4;">Global CS</div>
<div class="t" style="left:1058.3px;top:734px;font-size:11.6px;color:#f4f4f4;">4</div>
<div class="t" style="left:1090px;top:743px;font-size:13px;color:#f4f4f4;">24%</div>
<svg id="bb-icons" width="622" height="49" style="left:520px;top:720px" viewBox="520 720 622 49">
<defs>
<radialGradient id="gSph" cx="0.36" cy="0.3" r="0.8"><stop offset="0" stop-color="#ffffff"/><stop offset="0.45" stop-color="#d4d4d4"/><stop offset="1" stop-color="#6e6e6e"/></radialGradient>
<linearGradient id="gDisk" x1="0" x2="1" y1="0" y2="0"><stop offset="0" stop-color="#5e5e5e"/><stop offset="0.25" stop-color="#8e8e8e"/><stop offset="0.6" stop-color="#c8c8c8"/><stop offset="1" stop-color="#ffffff"/></linearGradient>
<linearGradient id="gDisk2" x1="0" x2="0" y1="0" y2="1"><stop offset="0" stop-color="#f0f0f0"/><stop offset="0.5" stop-color="#a8a8a8"/><stop offset="1" stop-color="#e8e8e8"/></linearGradient>
</defs>
<!-- fit -->
<g fill="none" stroke="#14f0c6" stroke-width="2.3"><path d="M538.9 742.6 V738.1 H543.4 M548.6 738.1 H553.1 V742.6 M553.1 747.6 V752.1 H548.6 M543.4 752.1 H538.9 V747.6"/></g>
<rect x="541.4" y="740.3" width="9.3" height="9.3" fill="#141414"/><rect x="542" y="740.9" width="8.1" height="8.1" fill="#ffffff"/>
<!-- sphere -->
<circle cx="574" cy="744.8" r="8.6" fill="#141414"/><circle cx="574" cy="744.8" r="8.2" fill="url(#gSph)"/>
<path d="M565.9 746.3 Q574 747.6 582.1 746.3 M576.2 736.9 Q577.4 745 575.4 752.9" fill="none" stroke="#1c1c1c" stroke-width="0.9"/>
<!-- disk part -->
<path d="M598.6 735.8 H603.4 A4.6 9.2 0 0 1 603.4 754.2 H598.6 A5.4 9.2 0 0 1 598.6 735.8 Z" fill="url(#gDisk)"/>
<ellipse cx="603.6" cy="745" rx="4.3" ry="9.1" fill="#ffffff"/>
<ellipse cx="604.4" cy="745" rx="3" ry="6" fill="#9a9a9a"/><ellipse cx="605" cy="745" rx="2.4" ry="5" fill="url(#gDisk2)"/>
<path d="M604.6 740.4 H609.2 V749.6 H604.6 A2 4.6 0 0 1 604.6 740.4 Z" fill="#b4b4b4"/>
<path d="M604.6 740.4 H609.2 V743.4 H603 Z" fill="#e2e2e2"/>
<ellipse cx="609.3" cy="745" rx="1.8" ry="4.6" fill="#ffffff"/>
<!-- plus -->
<path d="M858 739 V751.2 M851.9 745.1 H864.1" stroke="#8c8c8c" stroke-width="2.1"/>
<!-- chevron -->
<path d="M889.5 743.1 L894 747.7 L898.5 743.1" fill="none" stroke="#9c9c9c" stroke-width="1.3"/>
<!-- CS icon -->
<path d="M929.8 742.6 L934 745 V749.9 L929.8 752.3 L925.6 749.9 V745 Z" fill="#0fa37f"/>
<path d="M929.8 744.4 L932.5 746 V749.1 L929.8 750.7 L927.1 749.1 V746 Z" fill="#0b7d62"/>
<path d="M929.8 747.5 V739.4 M929.8 747.5 L922.8 751.4 M929.8 747.5 L936.8 751.4" fill="none" stroke="#c8c8c8" stroke-width="1.2"/>
<rect x="928.7" y="738.2" width="2.2" height="1.8" fill="#bdbdbd"/>
<path d="M921.8 750.2 L922.2 752.2 L924.2 752" fill="none" stroke="#c8c8c8" stroke-width="0.9"/>
<path d="M937.8 750.2 L937.4 752.2 L935.4 752" fill="none" stroke="#c8c8c8" stroke-width="0.9"/>
<!-- bell -->
<path d="M1056.8 736.9 Q1051.4 738 1051.2 744 L1050.6 748.6 L1049.4 750.3 H1063 L1061.8 748.6 L1061.6 745.2" fill="none" stroke="#a6a6a6" stroke-width="1.2" stroke-linejoin="round"/>
<path d="M1053 752.6 H1059" stroke="#a6a6a6" stroke-width="1.1"/>
<!-- progress -->
<path d="M1121 731 H1131 V757.4 Q1131 759.8 1128.6 759.8 H1123.4 Q1121 759.8 1121 757.4 Z" fill="#2a8f8a"/>
<rect x="1123.2" y="733.2" width="5.6" height="19.2" fill="#1e2a2a"/>
</svg>

<!-- nav cube -->
<div class="abs" style="left:447px;top:664px;width:53px;height:52px;background:#383838;"></div>
<div class="t" style="left:462.5px;top:683.5px;font-size:13.2px;color:#f4f4f4;">Top</div>
<div class="t" style="left:443px;top:637px;font-size:13px;color:#08c47c;">Y</div>
<div class="t" style="left:515px;top:709px;font-size:13px;color:#e2064f;">X</div>

<div class="abs" id="winL"></div>
<div class="abs" id="winR"></div>
<div class="abs" id="winB"></div>
</body>
</html>
